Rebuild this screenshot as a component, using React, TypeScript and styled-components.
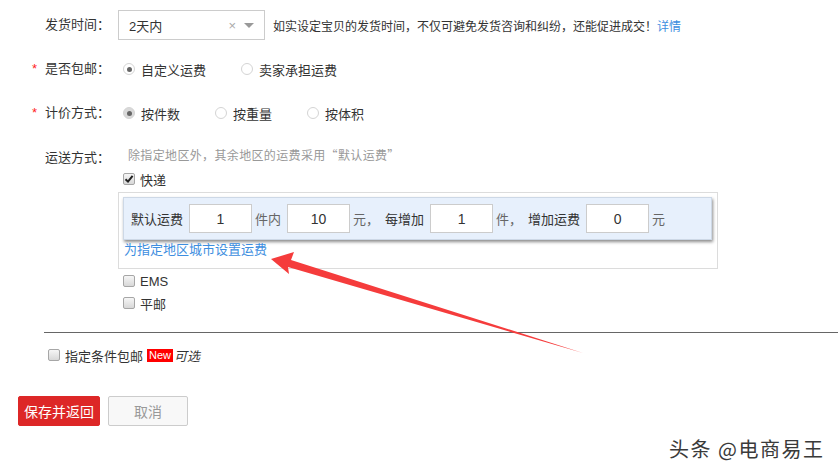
import styled, { createGlobalStyle } from "styled-components";

const GlobalStyle = createGlobalStyle`
  html, body {
    margin: 0;
    padding: 0;
    background: #ffffff;
  }
  body {
    font-family: "Liberation Sans", "Noto Sans CJK SC", sans-serif;
    font-size: 13px;
    color: #333;
  }
`;

const Page = styled.div`
  position: relative;
  width: 838px;
  height: 473px;
  overflow: hidden;
  padding-top: 3px;
  box-sizing: border-box;
`;

const Row = styled.div<{ $top?: boolean }>`
  display: flex;
  align-items: ${(p) => (p.$top ? "flex-start" : "center")};
  min-height: 44px;
`;

const Label = styled.div<{ $pad?: number }>`
  display: flex;
  width: 118px;
  flex-shrink: 0;
  box-sizing: border-box;
  padding-left: 32px;
  padding-top: ${(p) => p.$pad ?? 0}px;
  line-height: 20px;
  color: #333;
`;

const Star = styled.span`
  width: 13px;
  color: #f22;
`;

const Select = styled.div`
  display: flex;
  align-items: center;
  width: 147px;
  height: 30px;
  box-sizing: border-box;
  border: 1px solid #ccc;
  padding: 0 10px;
  color: #333;
`;

const SelectValue = styled.span`
  flex: 1;
`;

const ClearMark = styled.span`
  color: #aaa;
  font-size: 13px;
  margin-right: 8px;
`;

const Caret = styled.span`
  width: 0;
  height: 0;
  border-left: 5px solid transparent;
  border-right: 5px solid transparent;
  border-top: 5px solid #999;
`;

const Tip = styled.span`
  margin-left: 8px;
  font-family: "Noto Sans CJK SC", sans-serif;
  font-size: 12px;
  color: #333;
`;

const Link = styled.a`
  color: #3d8ee0;
  text-decoration: none;
  cursor: pointer;
`;

const Options = styled.div`
  display: flex;
  align-items: center;
  gap: 35px;
  padding-left: 5px;
`;

const Option = styled.label`
  display: flex;
  align-items: center;
  gap: 6px;
  color: #333;
`;

const RadioDot = styled.span<{ $checked?: boolean; $shade?: boolean }>`
  position: relative;
  width: 12px;
  height: 12px;
  box-sizing: border-box;
  border-radius: 50%;
  border: 1px solid #d4d4d4;
  background: ${(p) => (p.$shade ? "#d9d9d9" : "#fff")};

  &::after {
    content: "";
    display: ${(p) => (p.$checked ? "block" : "none")};
    position: absolute;
    left: 2.5px;
    top: 2.5px;
    width: 5px;
    height: 5px;
    border-radius: 50%;
    background: #666;
  }
`;

const Field = styled.div`
  display: flex;
  flex-direction: column;
`;

const Hint = styled.div`
  margin-top: 10px;
  padding-left: 10px;
  line-height: 20px;
  font-family: "Noto Sans CJK SC", sans-serif;
  font-size: 12px;
  letter-spacing: 0.35px;
  color: #999;
`;

const CheckRow = styled.label<{ $mt?: number; $ml?: number }>`
  display: flex;
  align-items: center;
  height: 22px;
  gap: 5px;
  margin-top: ${(p) => p.$mt ?? 0}px;
  padding-left: ${(p) => p.$ml ?? 5}px;
  color: #333;
`;

const Box = styled.span`
  display: flex;
  align-items: center;
  justify-content: center;
  width: 12px;
  height: 12px;
  box-sizing: border-box;
  border: 1px solid #a6a6a6;
  border-radius: 2px;
  background: linear-gradient(#f6f6f6, #d8d8d8);
`;

const FeeBox = styled.div`
  width: 600px;
  box-sizing: border-box;
  margin-top: 2px;
  border: 1px solid #dcdcdc;
  padding: 4px 5px 9px 4px;
`;

const Panel = styled.div`
  display: flex;
  align-items: center;
  height: 43px;
  box-sizing: border-box;
  padding: 0 7px;
  background: #e7f0fc;
  border: 1px solid #cdd8e6;
  box-shadow: 1px 2px 3px rgba(0, 0, 0, 0.45);
`;

const FeeLabel = styled.span`
  color: #333;
  margin-right: 6px;
`;

const Unit = styled.span`
  color: #666;
  margin: 0 6px 0 3px;
`;

const NumInput = styled.input`
  width: 63px;
  height: 29px;
  box-sizing: border-box;
  border: 1px solid #ccc;
  background: #fff;
  text-align: center;
  font-family: "Liberation Sans", sans-serif;
  font-size: 14px;
  color: #333;
  outline: none;
  padding: 0;
`;

const AreaLink = styled(Link)`
  display: block;
  padding-left: 1px;
  margin-top: 1px;
  line-height: 18px;
`;

const Divider = styled.div`
  margin: 18px 0 0 44px;
  height: 1px;
  background: #666;
`;

const NewBadge = styled.span`
  background: #f00;
  color: #fff;
  font-size: 11px;
  line-height: 13px;
  padding: 0 2px;
  margin-left: -1px;
`;

const Italic = styled.span`
  font-style: italic;
  margin-left: -4px;
`;

const Actions = styled.div`
  display: flex;
  gap: 8px;
  margin-top: 30px;
  padding-left: 18px;
`;

const Button = styled.button<{ $primary?: boolean }>`
  height: 30px;
  width: ${(p) => (p.$primary ? 82 : 80)}px;
  box-sizing: border-box;
  border-radius: 2px;
  border: 1px solid ${(p) => (p.$primary ? "#dd2727" : "#ccc")};
  background: ${(p) => (p.$primary ? "#dd2727" : "#f8f8f8")};
  color: ${(p) => (p.$primary ? "#fff" : "#999")};
  font-family: "Liberation Sans", "Noto Sans CJK SC", sans-serif;
  font-size: 14px;
  padding: 0;
  cursor: pointer;
`;

const Watermark = styled.div`
  position: absolute;
  left: 669px;
  top: 434px;
  font-family: "Noto Sans CJK SC", sans-serif;
  font-size: 20px;
  letter-spacing: 1.5px;
  color: #3a3a3a;
  text-shadow: 1px 1px 0 #fff, -1px -1px 0 #fff;
`;

const Overlay = styled.svg`
  position: absolute;
  left: 0;
  top: 0;
  pointer-events: none;
`;

const Check = () => (
  <svg width="10" height="10" viewBox="0 0 10 10">
    <path d="M1.5 5.2 L4 7.6 L8.6 1.8" fill="none" stroke="#222" strokeWidth="2" />
  </svg>
);

const App: React.FC = () => {
  return (
    <>
      <GlobalStyle />
      <Page>
        <Row>
          <Label>
            <Star />
            发货时间：
          </Label>
          <Select>
            <SelectValue>2天内</SelectValue>
            <ClearMark>×</ClearMark>
            <Caret />
          </Select>
          <Tip>
            如实设定宝贝的发货时间，不仅可避免发货咨询和纠纷，还能促进成交！<Link>详情</Link>
          </Tip>
        </Row>

        <Row>
          <Label>
            <Star>*</Star>
            是否包邮：
          </Label>
          <Options>
            <Option>
              <RadioDot $checked />
              自定义运费
            </Option>
            <Option>
              <RadioDot />
              卖家承担运费
            </Option>
          </Options>
        </Row>

        <Row>
          <Label>
            <Star>*</Star>
            计价方式：
          </Label>
          <Options>
            <Option>
              <RadioDot $checked $shade />
              按件数
            </Option>
            <Option>
              <RadioDot />
              按重量
            </Option>
            <Option>
              <RadioDot />
              按体积
            </Option>
          </Options>
        </Row>

        <Row $top>
          <Label $pad={13}>
            <Star />
            运送方式：
          </Label>
          <Field>
            <Hint>除指定地区外，其余地区的运费采用“默认运费”</Hint>
            <CheckRow $mt={3}>
              <Box>
                <Check />
              </Box>
              快递
            </CheckRow>
            <FeeBox>
              <Panel>
                <FeeLabel>默认运费</FeeLabel>
                <NumInput defaultValue="1" />
                <Unit>件内</Unit>
                <NumInput defaultValue="10" />
                <Unit>元，</Unit>
                <FeeLabel>每增加</FeeLabel>
                <NumInput defaultValue="1" />
                <Unit>件，</Unit>
                <FeeLabel>增加运费</FeeLabel>
                <NumInput defaultValue="0" />
                <Unit>元</Unit>
              </Panel>
              <AreaLink>为指定地区城市设置运费</AreaLink>
            </FeeBox>
            <CheckRow $mt={1}>
              <Box />
              EMS
            </CheckRow>
            <CheckRow>
              <Box />
              平邮
            </CheckRow>
          </Field>
        </Row>

        <Divider />

        <CheckRow $mt={11} $ml={48}>
          <Box />
          指定条件包邮
          <NewBadge>New</NewBadge>
          <Italic>可选</Italic>
        </CheckRow>

        <Actions>
          <Button $primary>保存并返回</Button>
          <Button>取消</Button>
        </Actions>

        <Watermark>头条 @电商易王</Watermark>

        <Overlay width="838" height="473" viewBox="0 0 838 473">
          <polygon
            points="271,259 294,252 291,260 583,353 288,267 289,274"
            fill="#f53c3c"
          />
        </Overlay>
      </Page>
    </>
  );
};

export default App;
